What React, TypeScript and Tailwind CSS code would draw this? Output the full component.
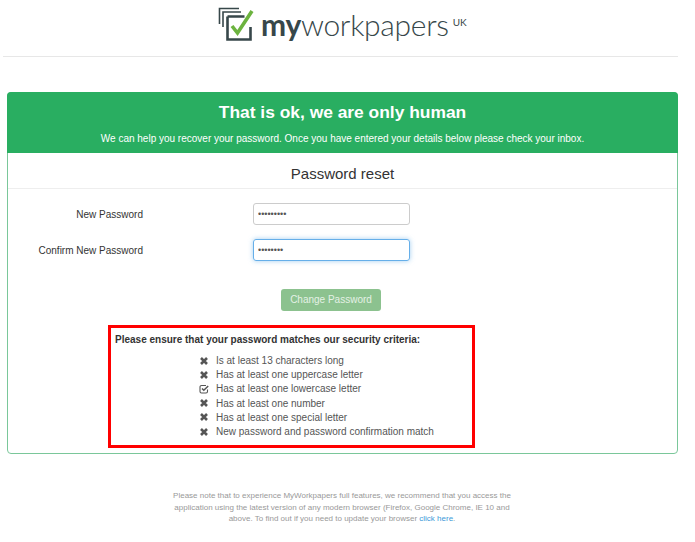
const criteria = [
  { label: "Is at least 13 characters long", ok: false },
  { label: "Has at least one uppercase letter", ok: false },
  { label: "Has at least one lowercase letter", ok: true },
  { label: "Has at least one number", ok: false },
  { label: "Has at least one special letter", ok: false },
  { label: "New password and password confirmation match", ok: false },
];

const CheckIcon = () => (
  <svg width="10" height="10" viewBox="0 0 10 10" fill="none" stroke="#555">
    <path d="M8.5 5.5V7.5a1.5 1.5 0 0 1-1.5 1.5H2.5A1.5 1.5 0 0 1 1 7.5V3a1.5 1.5 0 0 1 1.5-1.5H7" strokeWidth="1.1" />
    <path d="M3 4.5l1.8 1.8L9.2 2" strokeWidth="1.5" />
  </svg>
);

const CrossIcon = () => (
  <svg width="10" height="10" viewBox="0 0 10 10" fill="none" stroke="#555">
    <path d="M2 2l6 6M8 2l-6 6" strokeWidth="2.6" />
  </svg>
);

const Logo = () => (
  <div className="flex h-[56px] items-start pl-[218px]">
    <svg width="36" height="34" viewBox="0 0 36 34" className="mt-[7px]" fill="none">
      <path d="M1.5 17V1.5H21" stroke="#37474a" strokeWidth="1.6" />
      <path d="M5 20V5h18" stroke="#37474a" strokeWidth="1.6" />
      <path d="M9.5 9.5h17M9.5 9.5v23h23V20" stroke="#37474a" strokeWidth="2.6" />
      <path d="M14 19l5.5 7L34 4" stroke="#6cb33f" strokeWidth="3.6" />
    </svg>
    <div className="mt-[5px] ml-[7px] font-['Lato',sans-serif] text-[30px] leading-[38px] tracking-[-0.3px] text-[#37474a]">
      <span className="font-bold">my</span>
      <span className="font-light">workpapers</span>
    </div>
    <div className="mt-[16px] ml-[4px] font-['Lato',sans-serif] text-[10px] leading-[12px] text-[#37474a]">UK</div>
  </div>
);

const Field = ({ label, value, focused }: { label: string; value: string; focused?: boolean }) => (
  <div className="flex items-center">
    <label className="w-[135px] text-right text-[10px] text-[#333]">{label}</label>
    <input
      type="password"
      readOnly
      defaultValue={value}
      className={
        focused
          ? "ml-[110px] h-[22px] w-[157px] rounded-[3px] border border-[#66afe9] px-[4px] text-[9px] text-[#555] shadow-[0_0_5px_rgba(102,175,233,0.6)] outline-none"
          : "ml-[110px] h-[22px] w-[157px] rounded-[3px] border border-[#ccc] px-[4px] text-[9px] text-[#555] outline-none"
      }
    />
  </div>
);

export default function App() {
  return (
    <div className="min-h-[542px] bg-white font-['Liberation_Sans',Arial,sans-serif]">
      <Logo />
      <div className="ml-[3px] h-px w-[675px] bg-[#e7e7e7]" />

      <div className="mt-[35px] ml-[7px] h-[362px] w-[671px] rounded-[4px] border border-[#7ac79a]">
        <div className="-mx-px -mt-px flex h-[61px] flex-col items-center rounded-t-[4px] bg-[#29ae61] text-white">
          <h1 className="mt-[8px] text-[17.4px] leading-[24px] font-bold">That is ok, we are only human</h1>
          <p className="mt-[8px] text-[10px] leading-[14px]">
            We can help you recover your password. Once you have entered your details below please check your inbox.
          </p>
        </div>

        <h2 className="h-[36px] border-b border-[#eee] text-center text-[15px] leading-[42px] text-[#333]">
          Password reset
        </h2>

        <div className="mt-[14px] flex flex-col gap-[14px]">
          <Field label="New Password" value="•••••••••" />
          <Field label="Confirm New Password" value="••••••••" focused />
        </div>

        <div className="mt-[25px] ml-[273px]">
          <button className="h-[22px] w-[100px] rounded-[3px] bg-[#8cc28f] text-[10px] font-normal text-[#e4f1e5]">
            Change Password
          </button>
        </div>

        <div className="mt-[14px] ml-[100px] h-[123px] w-[367px] border-[3px] border-[#ff0000] pt-[4px] pl-[4px]">
          <p className="text-[10px] leading-[16px] font-bold text-[#333]">
            Please ensure that your password matches our security criteria:
          </p>
          <ul className="mt-[6px] ml-[84px]">
            {criteria.map((item) => (
              <li key={item.label} className="flex h-[14.2px] items-center text-[10px] text-[#555]">
                <span className="flex w-[17px] shrink-0">{item.ok ? <CheckIcon /> : <CrossIcon />}</span>
                {item.label}
              </li>
            ))}
          </ul>
        </div>
      </div>

      <p className="mt-[36px] ml-[167px] w-[350px] text-center text-[8px] leading-[11.5px] text-[#999]">
        Please note that to experience MyWorkpapers full features, we recommend that you access the application using the
        latest version of any modern browser (Firefox, Google Chrome, IE 10 and above. To find out if you need to update
        your browser <a className="text-[#3b99d9]">click here</a>.
      </p>
    </div>
  );
}
